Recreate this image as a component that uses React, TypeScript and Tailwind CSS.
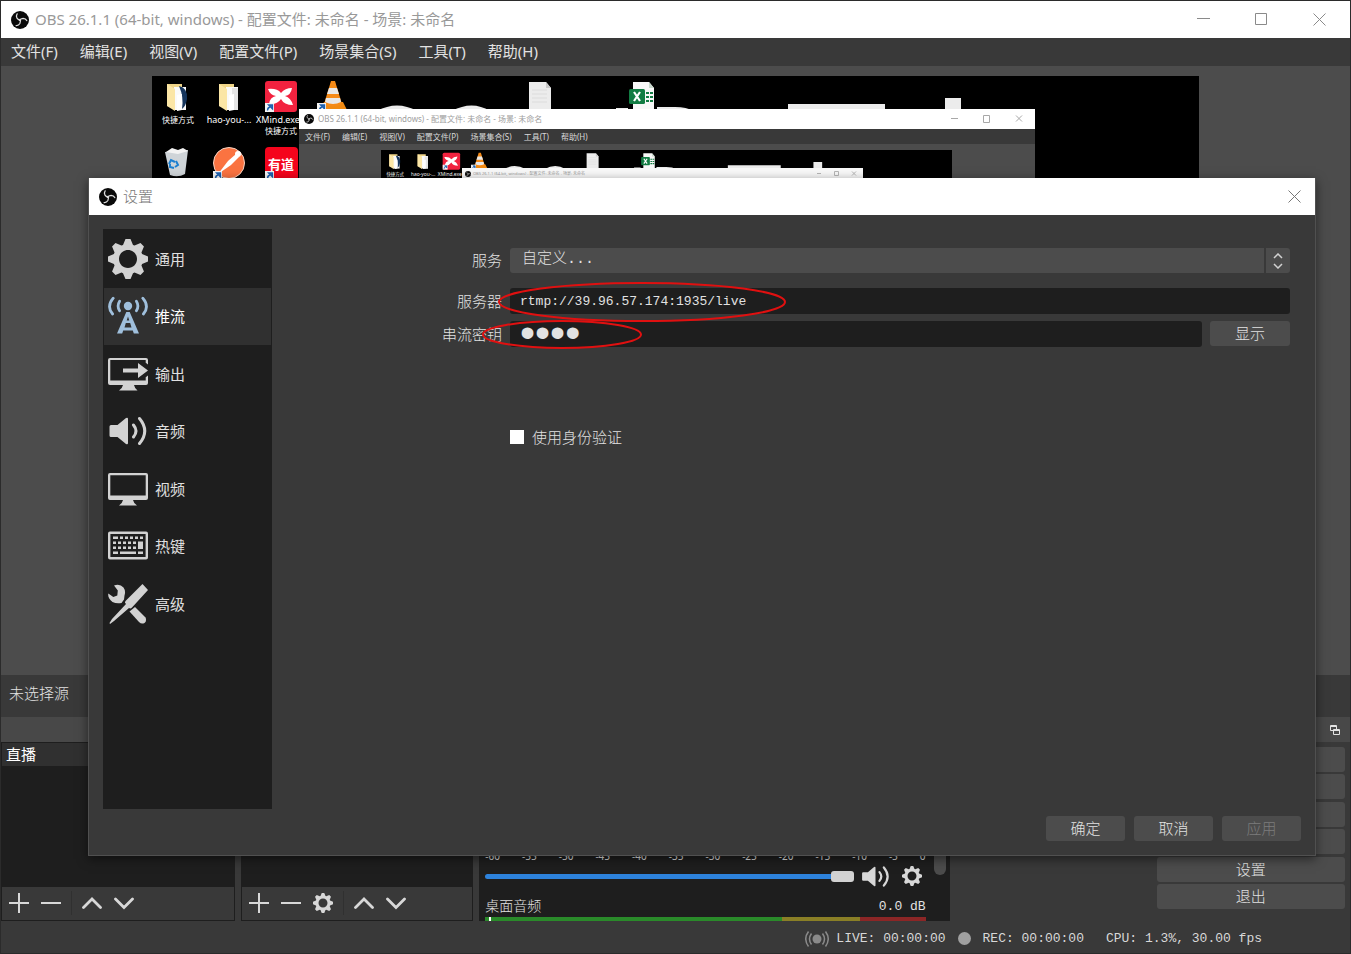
import React from "react";

const UI = "font-['Noto_Sans','Noto_Sans_CJK_SC',sans-serif]";
const MONO = "font-['Liberation_Mono','Noto_Sans_CJK_SC',monospace]";

const MENU = ["文件(F)", "编辑(E)", "视图(V)", "配置文件(P)", "场景集合(S)", "工具(T)", "帮助(H)"];
const TITLE = "OBS 26.1.1 (64-bit, windows) - 配置文件: 未命名 - 场景: 未命名";
const TICKS = ["-60", "-55", "-50", "-45", "-40", "-35", "-30", "-25", "-20", "-15", "-10", "-5", "0"];

type IconProps = { className?: string };

function Logo({ className }: IconProps) {
  const blade = "M12.800 12.200Q10 12.500 8 9.500 6.300 6.500 8.200 3.800";
  return (
    <svg viewBox="0 0 24 24" className={className} aria-hidden="true">
      <circle cx="12" cy="12" r="12" fill="#0a0a0a" />
      <g fill="none" stroke="#e0e0e0" strokeWidth="1.700" strokeLinecap="round">
        <path d={blade} />
        <path d={blade} transform="rotate(120 12 12)" />
        <path d={blade} transform="rotate(240 12 12)" />
      </g>
    </svg>
  );
}

function Gear({ className }: IconProps) {
  return (
    <svg viewBox="0 0 8 8" className={className} fill="currentColor" aria-hidden="true">
      <path d="M3.500 0l-.5 1.190-.31.13-1.190-.5-.69.69.5 1.190-.13.31-1.190.5v1l1.190.5.13.31-.5 1.190.69.69 1.190-.5.31.13.5 1.190h1l.5-1.190.31-.13 1.190.5.69-.69-.5-1.190.13-.31 1.190-.5v-1l-1.190-.5-.13-.31.5-1.190-.69-.69-1.190.5-.31-.13-.5-1.190h-1zm.5 2.200c1 0 1.800.8 1.800 1.800s-.8 1.800-1.800 1.800-1.800-.8-1.800-1.800.8-1.800 1.800-1.800z" />
    </svg>
  );
}

function Antenna({ className }: IconProps) {
  return (
    <svg viewBox="0 0 40 40" className={className} fill="none" stroke="currentColor" aria-hidden="true">
      <circle cx="20" cy="10" r="4.200" fill="currentColor" stroke="none" />
      <path d="M11.600 5.200Q8.600 10 11.600 14.800M28.400 5.200Q31.400 10 28.400 14.800" strokeWidth="2.800" strokeLinecap="round" />
      <path d="M5.200 2.200Q-1.800 10.500 4.600 18M34.800 2.200Q41.800 10.500 35.400 18" strokeWidth="2.800" strokeLinecap="round" />
      <path d="M18.300 16h3.400l9.300 21.500h-5.200l-1-3h-9.600l-1 3H9zM20 20.500l-1.300 4h2.600zM17.800 27l-1.300 4.500h7L22.200 27z" fill="currentColor" stroke="none" fillRule="evenodd" />
    </svg>
  );
}

function Output({ className }: IconProps) {
  return (
    <svg viewBox="0 0 40 40" className={className} fill="currentColor" aria-hidden="true">
      <path fillRule="evenodd" d="M2 4h36q2 0 2 2v4.500l-2.300-1.800V6h-35.400v20.500h35.400V23.300l2.300-1.800V29q0 2-2 2h-12q.5 3 3.500 5.500H11q3.500-2.500 4-5.500H2q-2 0-2-2V6q0-2 2-2z" />
      <path d="M15 14.500h15V9l10 7.500-10 7.500v-5.500H15z" />
    </svg>
  );
}

function Monitor({ className }: IconProps) {
  return (
    <svg viewBox="0 0 40 40" className={className} fill="currentColor" aria-hidden="true">
      <path fillRule="evenodd" d="M2 4h36q2 0 2 2v23q0 2-2 2H25q.5 3 4 5.500H11q3.500-2.500 4-5.500H2q-2 0-2-2V6q0-2 2-2zM2.300 6.300v20.200h35.400V6.300z" />
    </svg>
  );
}

function Speaker({ className }: IconProps) {
  return (
    <svg viewBox="0 0 40 40" className={className} fill="none" stroke="currentColor" aria-hidden="true">
      <path d="M3 14h6.500L18 7q2-1 2 1v24q0 2-2 1l-8.500-7H3q-1.500 0-1.500-1.500v-9Q1.500 14 3 14z" fill="currentColor" stroke="none" />
      <path d="M25.500 14q5 6 0 12M31.500 7.500q10.500 12.500 0 25" strokeWidth="3" strokeLinecap="round" />
    </svg>
  );
}

function Keyboard({ className }: IconProps) {
  return (
    <svg viewBox="0 2 40 40" className={className} fill="currentColor" aria-hidden="true">
      <path fillRule="evenodd" d="M2 6.500h36q2 0 2 2v24q0 2-2 2H2q-2 0-2-2v-24q0-2 2-2zM2.400 9v23h35.200V9z" />
      <path d="M5 11.500h5V14H5zM12 11.500h3V14h-3zM17 11.500h3V14h-3zM22 11.500h3V14h-3zM27 11.500h3V14h-3zM32 11.500h3V14h-3zM5 16.500h3V19H5zM10 16.500h3V19h-3zM15 16.500h3V19h-3zM20 16.500h3V19h-3zM25 16.500h3V19h-3zM30 16.500h5V24h-5zM5 21.500h3V24H5zM10 21.500h3V24h-3zM15 21.500h3V24h-3zM20 21.500h3V24h-3zM25 21.500h3V24h-3zM5 26.500h5V29H5zM12 26.500h16V29H12zM30 26.500h5V29h-5z" />
    </svg>
  );
}

function Tools({ className }: IconProps) {
  return (
    <svg viewBox="0 0 40 40" className={className} fill="currentColor" aria-hidden="true">
      <path d="M34.500 0l5.500 6L24 23.500q-1.500 1.500-3 .5L6 37l-4 3-.5-1L4 35l14-15q-2-1.500-.5-3z" />
      <path d="M6 1.500q6-2 9.500 2 2.500 3.500 1 8l-.5 4-2.500 3.500q-5 1-9-1Q-.5 14.500.3 9.500l5 3.500 4-1.500.5-5z" />
      <path d="M21.500 27.500l5.500-4.500 10.500 10.500q1.500 3.500-1 5.500-3 1.500-5.500-1z" />
    </svg>
  );
}

function ShortcutMark({ x, y }: { x: number; y: number }) {
  return (
    <g transform={`translate(${x} ${y})`}>
      <rect width="9" height="9" fill="#f4f4f4" />
      <path d="M2.500 7.500Q2.500 4.500 5 4M3.500 2h4v4z" stroke="#1b5fae" strokeWidth="1.300" fill="#1b5fae" fillOpacity=".9" />
    </g>
  );
}

function Folder({ x, dark }: { x: number; dark?: boolean }) {
  return (
    <g transform={`translate(${x} 7)`}>
      <path d="M0 1h15v25L0 23z" fill="#f0d588" />
      <path d="M7 4h12v23H7z" fill="#fafafa" />
      {dark ? <path d="M12 3q9 2 8 13-1 7-5 10 2-12-3-23z" fill="#16355c" /> : <path d="M13 5h6v22h-6z" fill="#e4e4e4" />}
      <path d="M0 1l8 5v22l-8-5z" fill="#fbe6a6" />
      <path d="M10 12l5-1v16l-5 1z" fill="#fff" />
    </g>
  );
}

/* Icons, labels and wallpaper of the captured desktop. */
function DesktopArt({ className }: IconProps) {
  return (
    <svg viewBox="0 0 1047 104" className={className} aria-hidden="true">
      <g fill="#ececec">
        <path d="M225 35q20-11 40 0zM300 35q20-11 38 0zM464 35v-3h12v3zM505 35v-4h18q12 0 18 4zM636 28h97v7h-97zM793 22h16v13h-16z" />
      </g>
      <Folder x={15} dark />
      <Folder x={67} />
      <rect x="113" y="5" width="32" height="31" rx="3" fill="#f2223f" />
      <path d="M116 13q9-1 13 4 4-5 11-5-1 7-7 8 6 2 8 9-9 0-12-6-4 6-12 5 1-7 7-8-6-1-8-7z" fill="#fff" />
      <ShortcutMark x={113} y={27} />
      <path d="M172 26h19l4 8h-27z" fill="#f08a12" />
      <path d="M179 5h4l7 23q-9 5-18 0z" fill="#f58a17" />
      <path d="M177 12h8l2 6h-12zM174 22h14l1 4q-8 4-16 0z" fill="#e8e8e8" />
      <ShortcutMark x={165} y={27} />
      <path d="M377 6h17l5 6v23h-22z" fill="#ececec" />
      <path d="M394 6v6h5z" fill="#c8c8c8" />
      <path d="M380 14h15M380 18h15M380 22h15M380 26h15" stroke="#dcdcdc" />
      <path d="M481 6h16l5 6v23h-21z" fill="#f8f8f8" />
      <path d="M497 6v6h5z" fill="#c8d8cc" />
      <rect x="477" y="13" width="16" height="15" rx="1.500" fill="#127c43" />
      <path d="M482 16l6 9M488 16l-6 9" stroke="#fff" strokeWidth="2.200" />
      <path d="M494 17h7M494 21h7M494 25h7" stroke="#127c43" strokeWidth="2" strokeDasharray="3 1" />
      <path d="M13 76l23-2-3 24q-7 4-15 1z" fill="#cfd4d8" />
      <path d="M14 76l6-4 6 2 5-2 5 3-10 3z" fill="#f3f3f3" />
      <path d="M17 88l2-4 4 2M24 85l2 4-3 2M22 92l-4-1 0-3" stroke="#1c7fd0" strokeWidth="2" fill="none" />
      <circle cx="77" cy="87" r="15.500" fill="#fa7341" stroke="#f6d3c4" />
      <path d="M66 98l10-13 8-7 3 3-8 8z" fill="#fff" />
      <circle cx="86" cy="78" r="3" fill="#fff" />
      <ShortcutMark x={61} y={95} />
      <rect x="113" y="71" width="33" height="34" rx="4" fill="#f5041c" />
      <ShortcutMark x={113} y={95} />
      <g fill="#fff" fontFamily="'Noto Sans','Noto Sans CJK SC',sans-serif" fontSize="9" textAnchor="middle">
        <text x="129" y="93" fontSize="13" fontWeight="700">有道</text>
        <text x="26" y="47" fontSize="8">快捷方式</text>
        <text x="77" y="47">hao-you-...</text>
        <text x="126" y="47">XMind.exe</text>
        <text x="129" y="58" fontSize="8">快捷方式</text>
      </g>
    </svg>
  );
}

function WindowButtons() {
  const base = "flex items-center justify-center w-[58px] h-full text-[#8a8a8a]";
  return (
    <div className="flex h-full pr-[2px]">
      <button aria-label="最小化" className={base}>
        <svg width="13" height="13" viewBox="0 0 13 13" stroke="currentColor"><path d="M0 5.500h13" /></svg>
      </button>
      <button aria-label="最大化" className={base}>
        <svg width="13" height="13" viewBox="0 0 13 13" stroke="currentColor" fill="none"><path d="M.5.5h11v11H.5z" /></svg>
      </button>
      <button aria-label="关闭" className={base}>
        <svg width="13" height="13" viewBox="0 0 13 13" stroke="currentColor"><path d="M.5.5l12 12M12.500.5l-12 12" /></svg>
      </button>
    </div>
  );
}

/* Preview of the captured screen, which shows this window again at a smaller scale. */
function Preview() {
  return (
    <div className="relative mx-[151px] h-[590px] overflow-hidden bg-black">
      <DesktopArt className="w-full" />
      <div className="absolute left-[147px] right-[164px] top-[33px] h-[410px] bg-[#4c4c4c]">
        <div className="flex h-5 items-center bg-white pl-[5px] text-[#a0a0a0]">
          <Logo className="mr-1 size-[10px]" />
          <span className="flex-1 text-[8px]">{TITLE}</span>
          <svg width="72" height="8" viewBox="0 0 72 8" fill="none" stroke="#a8a8a8" className="mr-3">
            <path d="M0 3.500h7M32.500.5h6v7h-6zM65 .5l6 6M71 .5l-6 6" />
          </svg>
        </div>
        <div className="flex h-[15px] items-center gap-3 bg-[#393939] px-[6px] text-[8px] text-[#d8d8d8]">
          {MENU.map((m) => <span key={m}>{m}</span>)}
        </div>
        <div className="relative mt-[6px] ml-[82px] mr-[83px] h-[300px] bg-black">
          <DesktopArt className="w-full" />
          <div className="absolute left-[81px] right-[89px] top-[18px] flex h-[11px] items-center bg-[#f8f8f8] pl-[3px] text-[#999]">
            <Logo className="mr-[2px] size-[6px]" />
            <span className="flex-1 text-[4px]">{TITLE}</span>
            <svg width="40" height="5" viewBox="0 0 40 5" fill="none" stroke="#b5b5b5" className="mr-[6px]">
              <path d="M0 2.500h4M17.500.5h4v4h-4zM35 .5l4 4M39 .5l-4 4" />
            </svg>
          </div>
        </div>
      </div>
    </div>
  );
}

function ToolButton({ label, children }: { label: string; children: React.ReactNode }) {
  return (
    <button aria-label={label} className="flex size-8 items-center justify-center text-[#d8d8d8]">
      {children}
    </button>
  );
}

function DockToolbar({ gear }: { gear?: boolean }) {
  const p = { width: 20, height: 20, viewBox: "0 0 20 20", stroke: "currentColor", fill: "none", strokeWidth: 2 };
  return (
    <div className="flex h-[34px] items-center border border-t-0 border-[#1e1e1e] bg-[#393939] pl-px pb-px">
      <ToolButton label="添加"><svg {...p}><path d="M10 0v20M0 10h20" /></svg></ToolButton>
      <ToolButton label="移除"><svg {...p}><path d="M0 10h20" /></svg></ToolButton>
      {gear && <ToolButton label="属性"><Gear className="size-5" /></ToolButton>}
      <span className="mx-1 h-6 w-px bg-[#303030]" />
      <ToolButton label="上移"><svg {...p} strokeWidth={2.8} strokeLinecap="round"><path d="M1.500 14.500L10 6l8.500 8.500" /></svg></ToolButton>
      <ToolButton label="下移"><svg {...p} strokeWidth={2.8} strokeLinecap="round"><path d="M1.500 6L10 14.500 18.500 6" /></svg></ToolButton>
    </div>
  );
}

const DOCK_TITLE = "h-[25px] shrink-0 bg-[#484848]";
const BTN = "rounded-[3px] bg-[#4c4c4c] text-[15px] font-light leading-[25px] h-[25px]";

function Docks() {
  return (
    <div className="flex h-[204px] gap-[6px] text-[15px] text-[#e2e2e2]">
      <section className="flex flex-[234] flex-col">
        <div className={DOCK_TITLE} />
        <div className="flex flex-1 flex-col border border-b-0 border-[#1e1e1e] bg-[#1e1e1e]">
          <div className="flex h-[23px] items-center bg-[#303030] px-1 text-white">直播</div>
        </div>
        <DockToolbar />
      </section>
      <section className="flex flex-[233] flex-col">
        <div className={DOCK_TITLE} />
        <div className="flex-1 bg-[#1e1e1e]" />
        <DockToolbar gear />
      </section>
      <section className="flex flex-[471] flex-col">
        <div className={DOCK_TITLE} />
        <div className="flex flex-1 bg-[#1e1e1e] pl-[6px] pr-1">
          <div className="flex flex-1 flex-col justify-end">
            <div className="flex justify-between text-[10px] leading-[10px]">
              {TICKS.map((t) => <span key={t}>{t}</span>)}
            </div>
            <div className="flex h-[30px] items-center">
              <div className="flex flex-1 items-center">
                <div className="h-[5px] flex-1 rounded-l-sm bg-[#2d82dc]" />
                <div className="h-[11px] w-[23px] rounded-[3px] bg-[#d2d2d2]" />
              </div>
              <button aria-label="静音" className="ml-[7px] text-[#d8d8d8]"><Speaker className="size-[29px]" /></button>
              <button aria-label="混音器设置" className="ml-3 mr-1 text-[#d8d8d8]"><Gear className="size-5" /></button>
            </div>
            <div className={`flex items-center justify-between pt-[6px] text-[13px] leading-5 ${MONO}`}>
              <span className="text-[14px] font-light">桌面音频</span>
              <span>0.0 dB</span>
            </div>
            <div className="flex h-1">
              <div className="flex-[296] bg-[#2a8a2a] pl-1"><div className="h-1 w-[2px] bg-white" /></div>
              <div className="flex-[79] bg-[#8a7f26]" />
              <div className="flex-[66] bg-[#8c2626]" />
            </div>
          </div>
          <div className="ml-2 mb-[46px] w-3 rounded-full bg-[#4c4c4c]" />
        </div>
      </section>
      <section className="flex flex-[395] flex-col">
        <div className={`${DOCK_TITLE} flex items-center justify-end pr-[10px]`}>
          <svg width="10" height="10" viewBox="0 0 10 10" fill="none" stroke="#e2e2e2">
            <path d="M.5.5h6v5h-6zM.5 1.500h6" />
            <path d="M3.500 4.500h6v5h-6zM3.500 5.500h6" fill="#484848" />
          </svg>
        </div>
        <div className="flex flex-1 flex-col justify-between pl-[201px] pr-[5px] pt-[5px] pb-3">
          <button aria-label="开始推流" className={BTN} />
          <button aria-label="开始录制" className={BTN} />
          <button aria-label="启动虚拟摄像机" className={BTN} />
          <button aria-label="工作室模式" className={BTN} />
          <button className={BTN}>设置</button>
          <button className={BTN}>退出</button>
        </div>
      </section>
    </div>
  );
}

const NAV = [
  { label: "通用", Icon: Gear },
  { label: "推流", Icon: Antenna },
  { label: "输出", Icon: Output },
  { label: "音频", Icon: Speaker },
  { label: "视频", Icon: Monitor },
  { label: "热键", Icon: Keyboard },
  { label: "高级", Icon: Tools },
];

function SettingsDialog() {
  return (
    <div role="dialog" aria-label="设置" className="absolute left-[87px] right-[34px] top-[177px] border border-t-0 border-[#505050] bg-[#393939] shadow-[0_3px_10px_rgba(0,0,0,0.5)]">
      <header className="flex h-[37px] items-center bg-white pl-[10px] pr-[14px]">
        <Logo className="mr-[6px] size-[18px]" />
        <h2 className="flex-1 text-[15px] font-light text-[#777]">设置</h2>
        <button aria-label="关闭" className="text-[#777]">
          <svg width="13" height="13" viewBox="0 0 13 13" stroke="currentColor"><path d="M.5.5l12 12M12.500.5l-12 12" /></svg>
        </button>
      </header>
      <div className="flex px-[14px] pt-[14px]">
        <nav className="h-[580px] w-[169px] shrink-0 bg-[#1e1e1e] px-[1px] pt-[1px]">
          <ul className="grid h-[403px] grid-rows-7">
            {NAV.map(({ label, Icon }) => (
              <li key={label} className={label === "推流" ? "bg-[#303030]" : ""}>
                <button className={`flex h-full w-full items-center gap-[7px] pl-1 text-[15px] ${label === "推流" ? "text-white" : "text-[#e0e0e0]"}`}>
                  <Icon className={`size-10 ${label === "推流" ? "text-[#9fbfdc]" : "text-[#d2d2d2]"}`} />
                  {label}
                </button>
              </li>
            ))}
          </ul>
        </nav>
        <form className="relative flex-1 pl-[100px] pr-[11px] pt-[19px] text-[15px] font-light text-[#e2e2e2]" onSubmit={(e) => e.preventDefault()}>
          <div className="grid grid-cols-[130px_1fr] items-center gap-x-2 gap-y-[7px]">
            <label htmlFor="service" className="mb-2 text-right">服务</label>
            <div className="relative mb-2 flex h-[25px] rounded-[3px] bg-[#4c4c4c]">
              <select id="service" defaultValue="custom" className={`w-full appearance-none bg-transparent pl-3 outline-none ${MONO}`}>
                <option value="custom">自定义...</option>
              </select>
              <span className="pointer-events-none absolute inset-y-0 right-0 flex w-[26px] items-center justify-center border-l-2 border-[#393939]">
                <svg width="10" height="16" viewBox="0 0 10 16" fill="none" stroke="#d2d2d2" strokeWidth="1.500"><path d="M1 5l4-4 4 4M1 11l4 4 4-4" /></svg>
              </span>
            </div>
            <label htmlFor="server" className="text-right">服务器</label>
            <input id="server" defaultValue="rtmp://39.96.57.174:1935/live" className={`h-[26px] w-full rounded-[3px] bg-[#1e1e1e] px-[10px] text-[13px] font-normal outline-none ${MONO}`} />
            <label htmlFor="key" className="text-right">串流密钥</label>
            <div className="flex gap-2">
              <input id="key" type="password" defaultValue="live" className="h-[26px] min-w-0 flex-1 rounded-[3px] bg-[#1e1e1e] px-[10px] pb-1 font-['Liberation_Sans',sans-serif] text-[43px] leading-[22px] outline-none" />
              <button type="button" className={`${BTN} w-20`}>显示</button>
            </div>
          </div>
          <label className="mt-[79px] ml-[138px] flex w-fit items-center gap-2">
            <input type="checkbox" className="size-[14px] appearance-none bg-white" />
            使用身份验证
          </label>
          <svg className="pointer-events-none absolute left-[209px] top-[52px] h-[68px] w-[308px]" viewBox="0 0 308 68" fill="none" stroke="#e01010" strokeWidth="2">
            <ellipse cx="161" cy="21" rx="143" ry="19" />
            <ellipse cx="81" cy="53.500" rx="79" ry="13.500" />
          </svg>
        </form>
      </div>
      <footer className="flex justify-end gap-[9px] px-[14px] pt-[7px] pb-[14px]">
        <button className={`${BTN} w-[79px]`}>确定</button>
        <button className={`${BTN} w-[79px]`}>取消</button>
        <button disabled className={`${BTN} w-[79px] text-[#7c7c7c]`}>应用</button>
      </footer>
    </div>
  );
}

export default function App() {
  return (
    <div className={`relative flex min-h-screen flex-col overflow-hidden border border-[#2b2b2b] bg-[#393939] text-[#e2e2e2] ${UI}`}>
      <header className="flex h-[37px] items-center bg-white pl-[10px]">
        <Logo className="mr-[6px] size-[18px]" />
        <h1 className="flex-1 text-[15px] text-[#999]">{TITLE}</h1>
        <WindowButtons />
      </header>
      <nav className="flex h-7 items-center gap-[22px] px-[10px] pb-[2px] text-[15px]">
        {MENU.map((m) => <button key={m}>{m}</button>)}
      </nav>
      <main className="flex flex-1 flex-col">
        <div className="flex-1 bg-[#4c4c4c] pt-[10px] pb-[9px]"><Preview /></div>
        <div className="flex h-[42px] items-center px-2 pb-[6px] text-[15px] font-light">未选择源</div>
        <Docks />
      </main>
      <footer className={`flex h-8 items-center justify-end pt-[3px] pr-[88px] text-[13px] text-[#d8d8d8] ${MONO}`}>
        <svg width="24" height="18" viewBox="0 0 24 18" fill="none" stroke="#8a8a8a" strokeWidth="1.500" className="mr-[7px]">
          <circle cx="12" cy="9" r="4.500" fill="#8a8a8a" stroke="none" />
          <path d="M6.500 3.500q-4 5.500 0 11M17.500 3.500q4 5.500 0 11M3.500 1.500q-5.500 7.500 0 15M20.500 1.500q5.500 7.500 0 15" />
        </svg>
        <span>LIVE: 00:00:00</span>
        <span className="mx-3 size-[13px] rounded-full bg-[#a0a0a0]" />
        <span>REC: 00:00:00</span>
        <span className="ml-[22px]">CPU: 1.3%, 30.00 fps</span>
      </footer>
      <SettingsDialog />
    </div>
  );
}
